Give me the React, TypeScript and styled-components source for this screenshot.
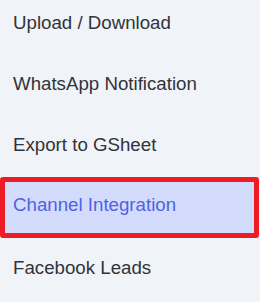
import React from 'react';
import styled, { createGlobalStyle } from 'styled-components';

const GlobalStyle = createGlobalStyle`
  html, body {
    margin: 0;
    padding: 0;
    background: #f0f3f8;
    overflow: hidden;
  }
`;

const Menu = styled.nav`
  width: 260px;
  height: 302px;
  overflow: hidden;
  background: #f0f3f8;
  font-family: 'Liberation Sans', Arial, sans-serif;
`;

const List = styled.ul`
  list-style: none;
  margin: -7px 0 0;
  padding: 0;
`;

const Item = styled.li<{ $active?: boolean }>`
  box-sizing: border-box;
  height: 61.25px;
  width: 259px;
  display: flex;
  align-items: center;
  padding-left: ${(p) => (p.$active ? '8px' : '13px')};
  padding-bottom: ${(p) => (p.$active ? '4px' : '2px')};
  font-size: 18.7px;
  color: ${(p) => (p.$active ? '#4f62df' : '#30333a')};
  background: ${(p) => (p.$active ? '#d4dcfd' : 'transparent')};
  border: ${(p) => (p.$active ? '5px solid #ee1d25' : 'none')};
  border-radius: ${(p) => (p.$active ? '3px' : '0')};
  white-space: nowrap;
`;

const items = [
  'Upload / Download',
  'WhatsApp Notification',
  'Export to GSheet',
  'Channel Integration',
  'Facebook Leads',
];

export default function App() {
  return (
    <Menu>
      <GlobalStyle />
      <List>
        {items.map((label) => (
          <Item key={label} $active={label === 'Channel Integration'}>
            {label}
          </Item>
        ))}
      </List>
    </Menu>
  );
}
